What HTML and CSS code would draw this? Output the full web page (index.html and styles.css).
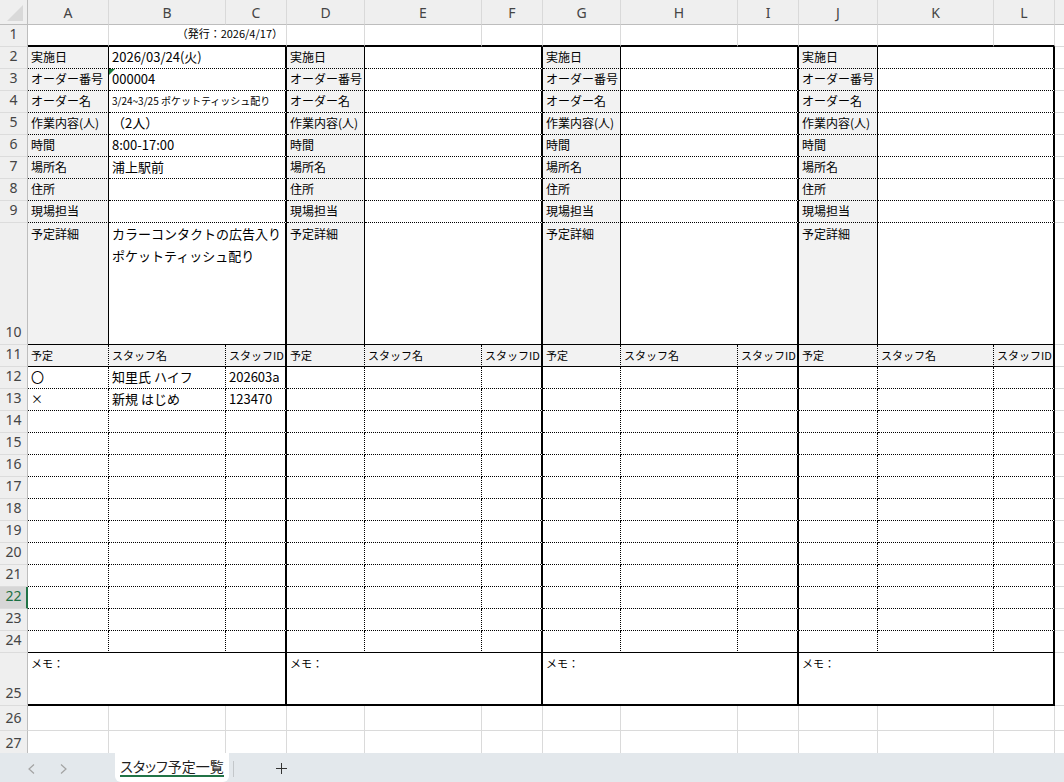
FILE: index.html
```html
<!DOCTYPE html>
<html lang="ja">
<head>
<meta charset="utf-8">
<title>スタッフ予定一覧</title>
<link rel="stylesheet" href="styles.css">
</head>
<body>
<div class="book">
  <div class="sheet">
    <table class="grid">
      <colgroup>
        <col class="w-rh"><col class="w-a"><col class="w-b"><col class="w-c">
        <col class="w-d"><col class="w-b"><col class="w-c">
        <col class="w-d"><col class="w-b"><col class="w-c">
        <col class="w-j"><col class="w-k"><col class="w-c">
        <col class="w-m">
      </colgroup>
      <tr class="colhead">
        <th class="corner"><svg class="corner-mark" width="27" height="24" viewBox="0 0 27 24"><polygon points="7,21 23,5 23,21" fill="#d9d9d9"/></svg></th>
        <th>A</th><th>B</th><th>C</th><th>D</th><th>E</th><th>F</th>
        <th>G</th><th>H</th><th>I</th><th>J</th><th>K</th><th>L</th><th class="edge"></th>
      </tr>
      <tr class="r1">
        <th class="rh">1</th>
        <td></td><td colspan="2" class="issue">（発行：2026/4/17）</td>
        <td></td><td></td><td></td><td></td><td></td><td></td><td></td><td></td><td></td>
        <td class="m"></td>
      </tr>
      <tr class="info">
        <th class="rh">2</th>
        <td class="lbl">実施日</td><td class="val" colspan="2">2026/03/24(火)</td>
        <td class="lbl">実施日</td><td class="val" colspan="2"></td>
        <td class="lbl">実施日</td><td class="val" colspan="2"></td>
        <td class="lbl">実施日</td><td class="val" colspan="2"></td>
        <td class="m"></td>
      </tr>
      <tr class="info">
        <th class="rh">3</th>
        <td class="lbl">オーダー番号</td><td class="val flagged" colspan="2"><span class="flag"></span>000004</td>
        <td class="lbl">オーダー番号</td><td class="val" colspan="2"></td>
        <td class="lbl">オーダー番号</td><td class="val" colspan="2"></td>
        <td class="lbl">オーダー番号</td><td class="val" colspan="2"></td>
        <td class="m"></td>
      </tr>
      <tr class="info">
        <th class="rh">4</th>
        <td class="lbl">オーダー名</td><td class="val small" colspan="2">3/24~3/25 ポケットティッシュ配り</td>
        <td class="lbl">オーダー名</td><td class="val" colspan="2"></td>
        <td class="lbl">オーダー名</td><td class="val" colspan="2"></td>
        <td class="lbl">オーダー名</td><td class="val" colspan="2"></td>
        <td class="m"></td>
      </tr>
      <tr class="info">
        <th class="rh">5</th>
        <td class="lbl">作業内容(人)</td><td class="val" colspan="2">（2人）</td>
        <td class="lbl">作業内容(人)</td><td class="val" colspan="2"></td>
        <td class="lbl">作業内容(人)</td><td class="val" colspan="2"></td>
        <td class="lbl">作業内容(人)</td><td class="val" colspan="2"></td>
        <td class="m"></td>
      </tr>
      <tr class="info">
        <th class="rh">6</th>
        <td class="lbl">時間</td><td class="val" colspan="2">8:00-17:00</td>
        <td class="lbl">時間</td><td class="val" colspan="2"></td>
        <td class="lbl">時間</td><td class="val" colspan="2"></td>
        <td class="lbl">時間</td><td class="val" colspan="2"></td>
        <td class="m"></td>
      </tr>
      <tr class="info">
        <th class="rh">7</th>
        <td class="lbl">場所名</td><td class="val" colspan="2">浦上駅前</td>
        <td class="lbl">場所名</td><td class="val" colspan="2"></td>
        <td class="lbl">場所名</td><td class="val" colspan="2"></td>
        <td class="lbl">場所名</td><td class="val" colspan="2"></td>
        <td class="m"></td>
      </tr>
      <tr class="info">
        <th class="rh">8</th>
        <td class="lbl">住所</td><td class="val" colspan="2"></td>
        <td class="lbl">住所</td><td class="val" colspan="2"></td>
        <td class="lbl">住所</td><td class="val" colspan="2"></td>
        <td class="lbl">住所</td><td class="val" colspan="2"></td>
        <td class="m"></td>
      </tr>
      <tr class="info">
        <th class="rh">9</th>
        <td class="lbl">現場担当</td><td class="val" colspan="2"></td>
        <td class="lbl">現場担当</td><td class="val" colspan="2"></td>
        <td class="lbl">現場担当</td><td class="val" colspan="2"></td>
        <td class="lbl">現場担当</td><td class="val" colspan="2"></td>
        <td class="m"></td>
      </tr>
      <tr class="info detail">
        <th class="rh">10</th>
        <td class="lbl">予定詳細</td><td class="val" colspan="2">カラーコンタクトの広告入り<br>ポケットティッシュ配り</td>
        <td class="lbl">予定詳細</td><td class="val" colspan="2"></td>
        <td class="lbl">予定詳細</td><td class="val" colspan="2"></td>
        <td class="lbl">予定詳細</td><td class="val" colspan="2"></td>
        <td class="m"></td>
      </tr>
      <tr class="staffhead">
        <th class="rh">11</th>
        <td>予定</td><td>スタッフ名</td><td class="end">スタッフID</td>
        <td>予定</td><td>スタッフ名</td><td class="end">スタッフID</td>
        <td>予定</td><td>スタッフ名</td><td class="end">スタッフID</td>
        <td>予定</td><td>スタッフ名</td><td class="end">スタッフID</td>
        <td class="m"></td>
      </tr>
      <tr class="staff">
        <th class="rh">12</th>
        <td>〇</td><td>知里氏 ハイフ</td><td class="end">202603a</td>
        <td></td><td></td><td class="end"></td>
        <td></td><td></td><td class="end"></td>
        <td></td><td></td><td class="end"></td>
        <td class="m"></td>
      </tr>
      <tr class="staff">
        <th class="rh">13</th>
        <td class="mark">×</td><td>新規 はじめ</td><td class="end">123470</td>
        <td></td><td></td><td class="end"></td>
        <td></td><td></td><td class="end"></td>
        <td></td><td></td><td class="end"></td>
        <td class="m"></td>
      </tr>
      <tr class="staff">
        <th class="rh">14</th>
        <td></td><td></td><td class="end"></td><td></td><td></td><td class="end"></td>
        <td></td><td></td><td class="end"></td><td></td><td></td><td class="end"></td>
        <td class="m"></td>
      </tr>
      <tr class="staff">
        <th class="rh">15</th>
        <td></td><td></td><td class="end"></td><td></td><td></td><td class="end"></td>
        <td></td><td></td><td class="end"></td><td></td><td></td><td class="end"></td>
        <td class="m"></td>
      </tr>
      <tr class="staff">
        <th class="rh">16</th>
        <td></td><td></td><td class="end"></td><td></td><td></td><td class="end"></td>
        <td></td><td></td><td class="end"></td><td></td><td></td><td class="end"></td>
        <td class="m"></td>
      </tr>
      <tr class="staff">
        <th class="rh">17</th>
        <td></td><td></td><td class="end"></td><td></td><td></td><td class="end"></td>
        <td></td><td></td><td class="end"></td><td></td><td></td><td class="end"></td>
        <td class="m"></td>
      </tr>
      <tr class="staff">
        <th class="rh">18</th>
        <td></td><td></td><td class="end"></td><td></td><td></td><td class="end"></td>
        <td></td><td></td><td class="end"></td><td></td><td></td><td class="end"></td>
        <td class="m"></td>
      </tr>
      <tr class="staff">
        <th class="rh">19</th>
        <td></td><td></td><td class="end"></td><td></td><td></td><td class="end"></td>
        <td></td><td></td><td class="end"></td><td></td><td></td><td class="end"></td>
        <td class="m"></td>
      </tr>
      <tr class="staff">
        <th class="rh">20</th>
        <td></td><td></td><td class="end"></td><td></td><td></td><td class="end"></td>
        <td></td><td></td><td class="end"></td><td></td><td></td><td class="end"></td>
        <td class="m"></td>
      </tr>
      <tr class="staff">
        <th class="rh">21</th>
        <td></td><td></td><td class="end"></td><td></td><td></td><td class="end"></td>
        <td></td><td></td><td class="end"></td><td></td><td></td><td class="end"></td>
        <td class="m"></td>
      </tr>
      <tr class="staff">
        <th class="rh sel">22</th>
        <td></td><td></td><td class="end"></td><td></td><td></td><td class="end"></td>
        <td></td><td></td><td class="end"></td><td></td><td></td><td class="end"></td>
        <td class="m"></td>
      </tr>
      <tr class="staff">
        <th class="rh">23</th>
        <td></td><td></td><td class="end"></td><td></td><td></td><td class="end"></td>
        <td></td><td></td><td class="end"></td><td></td><td></td><td class="end"></td>
        <td class="m"></td>
      </tr>
      <tr class="staff last">
        <th class="rh">24</th>
        <td></td><td></td><td class="end"></td><td></td><td></td><td class="end"></td>
        <td></td><td></td><td class="end"></td><td></td><td></td><td class="end"></td>
        <td class="m"></td>
      </tr>
      <tr class="memo">
        <th class="rh">25</th>
        <td colspan="3">メモ：</td>
        <td colspan="3">メモ：</td>
        <td colspan="3">メモ：</td>
        <td colspan="3">メモ：</td>
        <td class="m"></td>
      </tr>
      <tr class="blank">
        <th class="rh">26</th>
        <td></td><td></td><td></td><td></td><td></td><td></td>
        <td></td><td></td><td></td><td></td><td></td><td></td>
        <td class="m"></td>
      </tr>
      <tr class="blank">
        <th class="rh">27</th>
        <td></td><td></td><td></td><td></td><td></td><td></td>
        <td></td><td></td><td></td><td></td><td></td><td></td>
        <td class="m"></td>
      </tr>
    </table>
  </div>
  <div class="tabs">
    <div class="nav">
      <svg width="7" height="10" viewBox="0 0 7 10"><polyline points="6,0.5 1,5 6,9.5" fill="none" stroke="#a3a3a3" stroke-width="1.2"/></svg>
      <svg width="7" height="10" viewBox="0 0 7 10"><polyline points="1,0.5 6,5 1,9.5" fill="none" stroke="#a3a3a3" stroke-width="1.2"/></svg>
    </div>
    <div class="tab"><span class="tab-label">スタッフ予定一覧</span></div>
    <div class="sep"></div>
    <div class="add"><svg width="11" height="11" viewBox="0 0 11 11"><path d="M5.5 0V11M0 5.5H11" stroke="#333" stroke-width="1"/></svg></div>
  </div>
</div>
</body>
</html>
```

FILE: styles.css
```css
* { box-sizing: border-box; }

html, body {
  margin: 0;
  padding: 0;
}

body {
  width: 1064px;
  height: 782px;
  overflow: hidden;
  background: #fff;
  color: #000;
  font-family: "Noto Sans CJK JP", "Noto Sans", sans-serif;
}

.book {
  display: flex;
  flex-direction: column;
  height: 782px;
}

.sheet {
  height: 753px;
  overflow: hidden;
  flex: none;
}

/* ---------- grid ---------- */
.grid {
  table-layout: fixed;
  border-collapse: separate;
  border-spacing: 0;
  width: 1135px;
}

.w-rh { width: 28px; }
.w-a  { width: 81px; }
.w-b  { width: 117px; }
.w-c  { width: 61px; }
.w-d  { width: 78px; }
.w-j  { width: 79px; }
.w-k  { width: 116px; }
.w-m  { width: 80px; }

.grid th,
.grid td {
  padding: 0;
  border: 0 solid transparent;
  overflow: hidden;
  white-space: nowrap;
  font-weight: normal;
}

.grid td {
  font-size: 12px;
  line-height: 16px;
  padding-left: 3px;
  padding-bottom: 2px;
  vertical-align: middle;
  text-align: left;
}

/* column headers */
.colhead { height: 25px; }
.colhead th {
  background: #efefef;
  border-bottom: 1px solid #bdbdbd;
  border-right: 1px solid #d9d9d9;
  font-family: "Noto Sans", "Open Sans", sans-serif;
  font-size: 14px;
  color: #444;
  text-align: center;
  vertical-align: middle;
}
.colhead th.corner {
  border-right: 1px solid #bdbdbd;
  position: relative;
}
.corner-mark {
  display: block;
}
.colhead th.edge { border-right: 0; }

/* row headers */
.grid th.rh {
  background: #efefef;
  border-right: 1px solid #bdbdbd;
  border-bottom: 1px solid #dcdcdc;
  font-family: "Noto Sans", "Open Sans", sans-serif;
  font-size: 14px;
  line-height: 18px;
  color: #444;
  text-align: center;
  vertical-align: bottom;
  padding-bottom: 3px;
}
.grid th.rh.sel {
  background: #d6d6d6;
  color: #1b6f42;
  border-right: 2px solid #217346;
  padding-left: 1px;
}

/* column M outside the printed blocks */
.grid td.m {
  border-bottom: 1px solid #dadada;
}

/* row 1 */
.r1 { height: 22px; }
.r1 td {
  border-right: 1px solid #dadada;
  border-bottom: 2px solid #000;
}
.r1 td.m { border-bottom: 1px solid #dadada; }
.r1 td.issue {
  font-size: 11px;
  line-height: 16px;
  text-align: right;
  vertical-align: top;
  padding-right: 3px;
  padding-bottom: 0;
}

/* rows 2-10: order details */
.info { height: 22px; }
.info td.lbl {
  background: #f2f2f2;
  border-right: 1px solid #000;
  border-bottom: 1px dotted #000;
  font-size: 12px;
}
.info td.val {
  border-right: 2px solid #000;
  border-bottom: 1px dotted #000;
  font-size: 13px;
}
.info td.val.small { font-size: 10px; }
.info td.flagged { position: relative; }
.flag {
  position: absolute;
  left: 0;
  top: 0;
  width: 0;
  height: 0;
  border-top: 6px solid #1e7b3a;
  border-right: 6px solid transparent;
}

.info.detail { height: 122px; }
.info.detail td.lbl,
.info.detail td.val {
  border-bottom-style: solid;
  vertical-align: top;
  line-height: 22px;
  padding-bottom: 0;
}

/* row 11: staff header */
.staffhead { height: 22px; }
.staffhead td {
  background: #f2f2f2;
  border-right: 1px dotted #000;
  border-bottom: 1px solid #000;
  font-size: 11px;
}
.staffhead td.m { background: transparent; border-right: 0; border-bottom: 1px solid #dadada; }

/* rows 12-24: staff rows */
.staff { height: 22px; }
.staff td {
  border-right: 1px dotted #000;
  border-bottom: 1px dotted #000;
  font-size: 13px;
}
.staff.last td { border-bottom-style: solid; }
.staff td.mark { font-size: 12px; }
.staff td.m { border-right: 0; border-bottom: 1px solid #dadada; }

.staffhead td.end,
.staff td.end {
  border-right: 2px solid #000;
}

/* row 25: memo */
.memo { height: 53px; }
.memo td {
  border-right: 2px solid #000;
  border-bottom: 2px solid #000;
  font-size: 11px;
  line-height: 14px;
  vertical-align: top;
  padding-top: 3px;
  padding-bottom: 0;
}
.memo td.m { border-right: 0; border-bottom: 1px solid #dadada; }

/* rows below the blocks */
.blank { height: 25px; }
.blank td {
  border-right: 1px solid #dadada;
  border-bottom: 1px solid #dadada;
}

/* ---------- sheet tabs ---------- */
.tabs {
  flex: none;
  height: 29px;
  background: #e3e8ec;
  display: flex;
  align-items: flex-start;
}

.nav {
  width: 115px;
  height: 29px;
  display: flex;
  align-items: flex-start;
  gap: 25px;
  padding-left: 28px;
  padding-top: 11px;
}
.nav svg { display: block; }

.tab {
  width: 114px;
  height: 29px;
  background: #fff;
  border-radius: 0 0 6px 6px;
  display: flex;
  justify-content: center;
  align-items: flex-start;
  padding-top: 4px;
}
.tab-label {
  font-size: 14px;
  line-height: 18px;
  font-feature-settings: "palt";
  color: #1f1f1f;
  border-bottom: 2px solid #217346;
}

.sep {
  width: 1px;
  height: 16px;
  margin-left: 4px;
  margin-top: 8px;
  background: #c3c7ca;
}

.add {
  margin-left: 42px;
  margin-top: 10px;
}
.add svg { display: block; }
```
